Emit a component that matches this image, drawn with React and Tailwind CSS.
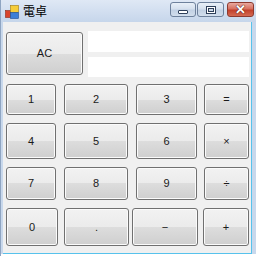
const btn =
  "flex items-center justify-center rounded-[3px] border border-[#707070] bg-[linear-gradient(to_bottom,#f2f2f2_0%,#ebebeb_50%,#dddddd_50%,#cfcfcf_100%)] shadow-[inset_0_0_0_1px_#fbfbfb] text-[11px] text-[#1a1a1a] shrink-0"

const Key = ({ label, w, h, ml, className = "" }) => (
  <div className={`${btn} ${className}`} style={{ width: w, height: h, marginLeft: ml }}>
    {label}
  </div>
)

const rows = [
  { h: 31, keys: [["1", 50, 3], ["2", 64, 8], ["3", 61, 8], ["=", 45, 7]] },
  { h: 36, keys: [["4", 50, 3], ["5", 64, 8], ["6", 61, 8], ["×", 45, 7]] },
  { h: 33, keys: [["7", 50, 3], ["8", 64, 8], ["9", 61, 8], ["÷", 45, 7]] },
  { h: 38, keys: [["0", 52, 3], [".", 65, 6], ["−", 66, 3], ["+", 46, 5]] },
]

const Icon = () => (
  <svg width="14" height="14" viewBox="0 0 14 14">
    <rect x="0.5" y="5.5" width="5" height="7" fill="#d9442c" stroke="#8a2a1a" strokeWidth="0.6" />
    <rect x="5.5" y="0.5" width="8" height="7" fill="#f6cd3a" stroke="#a07a10" strokeWidth="0.6" />
    <rect x="5.5" y="7.5" width="8" height="6" fill="#3d7fd6" stroke="#1d4f96" strokeWidth="0.6" />
  </svg>
)

const CapBtn = ({ w, close, children }) => (
  <div
    className={`flex items-center justify-center h-[15px] rounded-[3px] border ${
      close
        ? "border-[#8d3a2f] bg-[linear-gradient(to_bottom,#e9a99f_0%,#d7705f_45%,#c2402b_55%,#d56a52_100%)]"
        : "border-[#6e819c] bg-[linear-gradient(to_bottom,#e9f0f8_0%,#d5e0ee_45%,#c2d1e4_55%,#d2deed_100%)]"
    }`}
    style={{ width: w }}
  >
    {children}
  </div>
)

export default function App() {
  return (
    <div
      className="w-[256px] h-[256px] flex flex-col bg-[#c8d8ec] border-l border-[#8fa5c2] overflow-hidden"
      style={{ fontFamily: '"Liberation Sans", "Noto Sans CJK JP", sans-serif' }}
    >
      <div className="h-[22px] shrink-0 flex items-center bg-[linear-gradient(to_bottom,#dfe8f5_0%,#c6d6eb_100%)]">
        <div className="ml-[4px] mt-[1px]">
          <Icon />
        </div>
        <span className="ml-[4px] text-[12px] text-black" style={{ fontFamily: '"Noto Sans CJK JP", sans-serif' }}>
          電卓
        </span>
        <div className="ml-auto mr-[2px] flex items-center gap-[1px] -mt-[3px]">
          <CapBtn w={26}>
            <div className="w-[10px] h-[4px] bg-white border border-[#2e3f5a] rounded-[1px] mt-[5px]" />
          </CapBtn>
          <CapBtn w={27}>
            <div className="w-[10px] h-[8px] border border-[#2e3f5a] bg-white p-[1px]">
              <div className="w-full h-full bg-[#ccd8e8] border border-[#2e3f5a]" />
            </div>
          </CapBtn>
          <div className="w-[1px]" />
          <CapBtn w={27} close>
            <span className="text-white text-[13px] font-bold leading-none" style={{ textShadow: "0 0 1px #4a1008, 0 0 1px #4a1008" }}>
              ✕
            </span>
          </CapBtn>
        </div>
      </div>
      <div className="flex pr-[3px]">
        <div className="w-[2px] shrink-0" />
        <div className="w-[249px] h-[232px] bg-[#f0f0f0] border-r border-b border-[#57c2ec] flex flex-col">
          <div className="flex mt-[9px] h-[46px]">
            <div
              className={`${btn} ml-[3px] mt-[1px] w-[77px] h-[43px] border-[#3c7fb1] shadow-[inset_0_0_0_1px_#a8dcf6]`}
            >
              AC
            </div>
            <div className="ml-[5px] flex flex-col">
              <div className="w-[161px] h-[21px] bg-white" />
              <div className="w-[161px] h-[20px] bg-white mt-[5px]" />
            </div>
          </div>
          <div className="flex flex-col mt-[7px] gap-[8px]">
            {rows.map((r, i) => (
              <div key={i} className="flex">
                {r.keys.map(([l, w, ml]) => (
                  <Key key={l} label={l} w={w} h={r.h} ml={ml} />
                ))}
              </div>
            ))}
          </div>
        </div>
      </div>
      <div className="flex-1 bg-white" />
    </div>
  )
}
